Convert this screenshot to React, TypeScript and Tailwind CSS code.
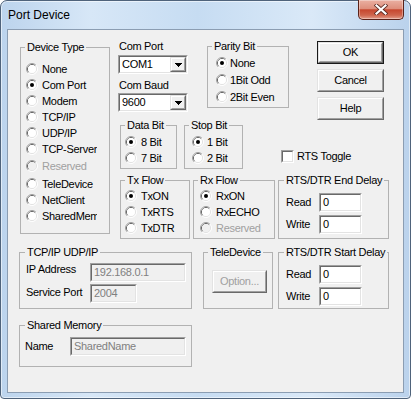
import React from 'react'

const font = "font-['Liberation_Sans',Arial,sans-serif]"

function RadioGlyph({ checked, disabled }: { checked?: boolean; disabled?: boolean }) {
  return (
    <svg width="12" height="12" viewBox="0 0 12 12" className="shrink-0">
      <path d="M2.11 9.89 A5.5 5.5 0 0 1 9.89 2.11" stroke="#a0a0a0" fill="none" />
      <path d="M9.89 2.11 A5.5 5.5 0 0 1 2.11 9.89" stroke="#ffffff" fill="none" />
      <path d="M2.82 9.18 A4.5 4.5 0 0 1 9.18 2.82" stroke="#696969" fill="none" />
      <path d="M9.18 2.82 A4.5 4.5 0 0 1 2.82 9.18" stroke="#e3e3e3" fill="none" />
      <circle cx="6" cy="6" r="4" fill={disabled ? '#f0f0f0' : '#ffffff'} />
      {checked && <circle cx="6" cy="6" r="2" fill="#000" />}
    </svg>
  )
}

function Radio({
  label,
  checked,
  disabled,
  gap = 'ml-[4px]',
  clip,
}: {
  label: string
  checked?: boolean
  disabled?: boolean
  gap?: string
  clip?: boolean
}) {
  return (
    <div className="flex h-[16px] items-center">
      <RadioGlyph checked={checked} disabled={disabled} />
      <span
        className={`${gap} whitespace-nowrap ${clip ? 'w-[55px] overflow-hidden' : ''} ${
          disabled ? 'text-[#a0a0a0]' : ''
        }`}
      >
        {label}
      </span>
    </div>
  )
}

function Sunken({
  className = '',
  inner = 'bg-white',
  children,
}: {
  className?: string
  inner?: string
  children?: React.ReactNode
}) {
  return (
    <div className={`shrink-0 border border-t-[#a0a0a0] border-l-[#a0a0a0] border-r-white border-b-white ${className}`}>
      <div
        className={`h-full w-full border border-t-[#696969] border-l-[#696969] border-r-[#e3e3e3] border-b-[#e3e3e3] ${inner}`}
      >
        {children}
      </div>
    </div>
  )
}

function Edit({ value, className, disabled }: { value: string; className: string; disabled?: boolean }) {
  return (
    <Sunken className={className} inner={disabled ? 'bg-[#f0f0f0]' : 'bg-white'}>
      <div className={`pl-[2px] pt-[1px] leading-[13px] whitespace-nowrap ${disabled ? 'text-[#808080]' : ''}`}>
        {value}
      </div>
    </Sunken>
  )
}

function Raised({ className = '', children }: { className?: string; children?: React.ReactNode }) {
  return (
    <div className={`shrink-0 border border-t-[#e3e3e3] border-l-[#e3e3e3] border-r-[#696969] border-b-[#696969] ${className}`}>
      <div className="flex h-full w-full items-center justify-center border border-t-white border-l-white border-r-[#a0a0a0] border-b-[#a0a0a0] bg-[#f0f0f0]">
        {children}
      </div>
    </div>
  )
}

function Button({ label, isDefault, disabled, className = '' }: { label: string; isDefault?: boolean; disabled?: boolean; className?: string }) {
  if (isDefault) {
    return (
      <div className={`shrink-0 border border-[#1a1a1a] ${className}`}>
        <Raised className="h-full w-full">{label}</Raised>
      </div>
    )
  }
  return (
    <Raised className={className}>
      <span className={disabled ? 'text-[#a0a0a0]' : ''}>{label}</span>
    </Raised>
  )
}

function Combo({ value }: { value: string }) {
  return (
    <Sunken className="h-[19px] w-[70px]">
      <div className="flex h-full items-stretch">
        <span className="flex-1 pl-[2px] pt-[1px] leading-[13px]">{value}</span>
        <Raised className="w-[16px]">
          <svg width="7" height="4" viewBox="0 0 7 4">
            <path d="M0 0h7v1h-1v1h-1v1h-1v1h-1v-1h-1v-1h-1v-1h-1z" fill="#000" />
          </svg>
        </Raised>
      </div>
    </Sunken>
  )
}

function Group({
  title,
  className,
  legend = 'ml-[4px]',
  children,
}: {
  title: string
  className: string
  legend?: string
  children?: React.ReactNode
}) {
  return (
    <fieldset className={`m-0 shrink-0 border border-[#b2b2b2] p-0 ${className}`}>
      <legend className={`${legend} px-[2px] leading-[13px]`}>{title}</legend>
      {children}
    </fieldset>
  )
}

export default function App() {
  return (
    <div className={`h-[399px] w-[411px] ${font} text-[11px] leading-[13px] tracking-[-0.3px] text-black`}>
      <div className="flex h-full w-full flex-col rounded-t-[7px] rounded-b-[4px] border border-[#4f637b] bg-[linear-gradient(90deg,#bcd4ed_0%,#d7e7f7_22%,#c6dcf2_48%,#dae9f8_76%,#bad2ec_100%)] shadow-[inset_0_0_0_1px_rgba(255,255,255,0.55)]">
        <div className="flex h-[28px] shrink-0 items-center justify-between">
          <span className="pl-[7px] text-[12px] leading-[15px] tracking-normal">Port Device</span>
          <div className="-mt-[1px] mr-[6px] flex h-[20px] w-[46px] items-center justify-center self-start rounded-b-[5px] border border-t-0 border-[#5a2219] bg-[linear-gradient(180deg,#eab0a2_0%,#de8f7c_45%,#c6472f_52%,#cf654d_80%,#e39e8c_100%)] shadow-[inset_0_0_0_1px_rgba(255,255,255,0.35)]">
            <svg width="14" height="11" viewBox="0 0 14 11">
              <path d="M2.5 1.5 L11.5 9.5 M11.5 1.5 L2.5 9.5" stroke="#5a2a22" strokeWidth="3.8" strokeLinecap="square" />
              <path d="M2.5 1.5 L11.5 9.5 M11.5 1.5 L2.5 9.5" stroke="#ffffff" strokeWidth="2.2" strokeLinecap="square" />
            </svg>
          </div>
        </div>

        <div className="ml-[6px] h-[364px] w-[397px] border border-[#8b9db2] bg-[#f0f0f0]">
          <div className="flex flex-col">
            {/* upper part */}
            <div className="flex items-start">
              <Group title="Device Type" className="ml-[12px] mt-[11px] h-[193px] w-[90px]">
                <div className="mt-[7px] flex flex-col pl-[5px]">
                  <Radio clip label="None" />
                  <Radio clip label="Com Port" checked />
                  <Radio clip label="Modem" />
                  <Radio clip label="TCP/IP" />
                  <Radio clip label="UDP/IP" />
                  <Radio clip label="TCP-Server" />
                  <div className="mt-[1px]">
                    <Radio clip label="Reserved" disabled />
                  </div>
                  <div className="mt-[2px]">
                    <Radio clip label="TeleDevice" />
                  </div>
                  <Radio clip label="NetClient" />
                  <Radio clip label="SharedMem" />
                </div>
              </Group>

              <div className="ml-[7px] flex flex-col">
                <div className="flex h-[89px] items-start">
                  <div className="ml-[1px] mt-[10px] flex flex-col">
                    <span className="pl-[1px]">Com Port</span>
                    <div className="mt-[2px]">
                      <Combo value="COM1" />
                    </div>
                    <span className="mt-[5px] pl-[1px]">Com Baud</span>
                    <div className="mt-[1px]">
                      <Combo value="9600" />
                    </div>
                  </div>

                  <Group title="Parity Bit" className="ml-[19px] mt-[10px] h-[68px] w-[82px]">
                    <div className="mt-[2px] flex flex-col pl-[8px]">
                      <div className="h-[17px]">
                        <Radio label="None" checked gap="ml-[2px]" />
                      </div>
                      <div className="h-[17px]">
                        <Radio label="1Bit Odd" gap="ml-[2px]" />
                      </div>
                      <div className="h-[17px]">
                        <Radio label="2Bit Even" gap="ml-[2px]" />
                      </div>
                    </div>
                  </Group>

                  <div className="ml-[28px] mt-[11px] flex flex-col gap-[5px]">
                    <Button label="OK" isDefault className="h-[23px] w-[67px]" />
                    <Button label="Cancel" className="h-[23px] w-[67px]" />
                    <Button label="Help" className="h-[23px] w-[67px]" />
                  </div>
                </div>

                <div className="flex h-[55px] items-start">
                  <Group title="Data Bit" className="ml-[3px] h-[50px] w-[57px]">
                    <div className="mt-[2px] flex flex-col pl-[4px]">
                      <Radio label="8 Bit" checked />
                      <Radio label="7 Bit" />
                    </div>
                  </Group>
                  <Group title="Stop Bit" className="ml-[7px] h-[50px] w-[59px]">
                    <div className="mt-[2px] flex flex-col pl-[7px]">
                      <Radio label="1 Bit" checked gap="ml-[3px]" />
                      <Radio label="2 Bit" gap="ml-[3px]" />
                    </div>
                  </Group>
                  <div className="ml-[38px] mt-[31px] flex items-center">
                    <Sunken className="h-[13px] w-[13px]" />
                    <span className="ml-[3px]">RTS Toggle</span>
                  </div>
                </div>

                <div className="flex items-start">
                  <Group title="Tx Flow" className="ml-[3px] h-[65px] w-[70px]">
                    <div className="mt-[1px] flex flex-col pl-[4px]">
                      <Radio label="TxON" checked />
                      <Radio label="TxRTS" />
                      <Radio label="TxDTR" />
                    </div>
                  </Group>
                  <Group title="Rx Flow" className="ml-[3px] h-[65px] w-[82px]">
                    <div className="mt-[1px] flex flex-col pl-[6px]">
                      <Radio label="RxON" checked />
                      <Radio label="RxECHO" />
                      <Radio label="Reserved" disabled />
                    </div>
                  </Group>
                  <Group title="RTS/DTR End Delay" className="ml-[3px] h-[65px] w-[111px]" legend="ml-[5px]">
                    <div className="mt-[6px] flex flex-col gap-[3px] pl-[7px]">
                      <div className="flex h-[19px] items-center">
                        <span className="w-[33px]">Read</span>
                        <Edit value="0" className="h-[19px] w-[43px]" />
                      </div>
                      <div className="flex h-[19px] items-center">
                        <span className="w-[33px]">Write</span>
                        <Edit value="0" className="h-[19px] w-[43px]" />
                      </div>
                    </div>
                  </Group>
                </div>
              </div>
            </div>

            {/* lower part */}
            <div className="mt-[7px] flex items-start">
              <Group title="TCP/IP UDP/IP" className="ml-[11px] h-[63px] w-[173px]" legend="ml-[5px]">
                <div className="mt-[4px] flex flex-col gap-[2px] pl-[6px]">
                  <div className="flex h-[19px] items-start">
                    <span className="w-[64px]">IP Address</span>
                    <Edit disabled value="192.168.0.1" className="h-[19px] w-[96px]" />
                  </div>
                  <div className="flex h-[19px] items-start">
                    <span className="mt-[2px] w-[64px]">Service Port</span>
                    <Edit disabled value="2004" className="h-[19px] w-[47px]" />
                  </div>
                </div>
              </Group>
              <Group title="TeleDevice" className="ml-[11px] h-[63px] w-[70px]">
                <div className="ml-[8px] mt-[11px]">
                  <Button label="Option..." disabled className="h-[23px] w-[55px]" />
                </div>
              </Group>
              <Group title="RTS/DTR Start Delay" className="ml-[5px] h-[63px] w-[111px]" legend="ml-[5px]">
                <div className="mt-[6px] flex flex-col gap-[3px] pl-[7px]">
                  <div className="flex h-[19px] items-center">
                    <span className="w-[33px]">Read</span>
                    <Edit value="0" className="h-[19px] w-[43px]" />
                  </div>
                  <div className="flex h-[19px] items-center">
                    <span className="w-[33px]">Write</span>
                    <Edit value="0" className="h-[19px] w-[43px]" />
                  </div>
                </div>
              </Group>
            </div>

            <div className="mt-[10px] flex">
              <Group title="Shared Memory" className="ml-[11px] h-[48px] w-[173px]" legend="ml-[5px]">
                <div className="mt-[5px] flex h-[19px] items-center pl-[5px]">
                  <span className="w-[45px]">Name</span>
                  <Edit disabled value="SharedName" className="h-[19px] w-[116px]" />
                </div>
              </Group>
            </div>
          </div>
        </div>
      </div>
    </div>
  )
}
